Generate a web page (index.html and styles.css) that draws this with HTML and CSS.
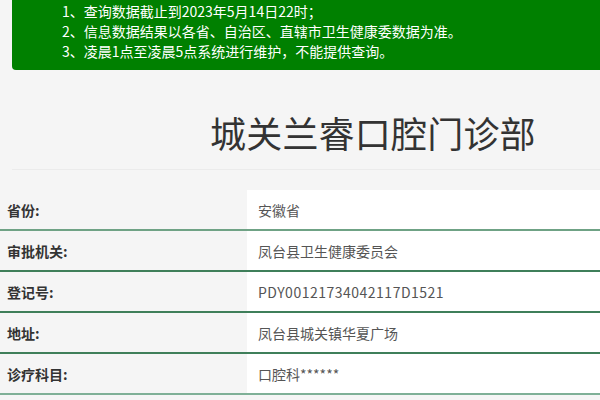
FILE: index.html
```html
<!DOCTYPE html>
<html lang="zh-CN">
<head>
<meta charset="utf-8">
<title>城关兰睿口腔门诊部</title>
<link rel="stylesheet" href="styles.css">
</head>
<body>
<div class="notice">
  <p>1、查询数据截止到2023年5月14日22时；</p>
  <p>2、信息数据结果以各省、自治区、直辖市卫生健康委数据为准。</p>
  <p>3、凌晨1点至凌晨5点系统进行维护，不能提供查询。</p>
</div>
<div class="title-wrap">
  <h1 class="title">城关兰睿口腔门诊部</h1>
</div>
<div class="info">
  <div class="row"><div class="label">省份:</div><div class="value">安徽省</div></div>
  <div class="row"><div class="label">审批机关:</div><div class="value">凤台县卫生健康委员会</div></div>
  <div class="row"><div class="label">登记号:</div><div class="value code">PDY00121734042117D1521</div></div>
  <div class="row"><div class="label">地址:</div><div class="value">凤台县城关镇华夏广场</div></div>
  <div class="row"><div class="label">诊疗科目:</div><div class="value">口腔科******</div></div>
</div>
</body>
</html>
```
FILE: styles.css
```css
html, body {
  margin: 0;
  padding: 0;
  background: #f5f5f5;
  font-family: "Noto Sans CJK SC", "Noto Sans", sans-serif;
  color: #333;
}
.notice {
  margin-left: 12px;
  background: #008000;
  color: #fff;
  padding: 1px 0 9px 50px;
  border-bottom-left-radius: 4px;
  font-size: 14px;
  line-height: 20px;
}
.notice p {
  margin: 0;
}
.title-wrap {
  margin-left: 12px;
  border-bottom: 1px solid #ebebeb;
  padding: 38px 0 13px 198px;
}
.title {
  margin: 0;
  font-size: 36px;
  line-height: 48px;
  font-weight: normal;
  color: #333;
  letter-spacing: 0.2px;
}
.info {
  margin-top: 20px;
}
.row {
  display: grid;
  grid-template-columns: 247px 1fr;
  height: 39px;
  border-bottom: 2px solid #3f7f5a;
}
.row:first-child {
  border-bottom-color: #6fa285;
}
.row:last-child {
  border-bottom-color: #7fb097;
}
.label {
  display: flex;
  align-items: center;
  padding-left: 7px;
  font-size: 14px;
  font-weight: bold;
  color: #333;
}
.value {
  display: flex;
  align-items: center;
  padding-left: 11px;
  background: #fff;
  font-size: 14px;
  color: #555;
}
.value.code {
  letter-spacing: 0.5px;
}
```
